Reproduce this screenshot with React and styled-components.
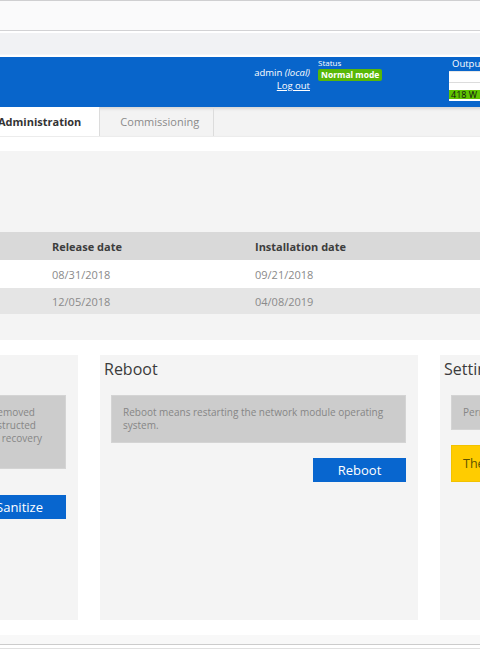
import React from "react";
import styled, { createGlobalStyle } from "styled-components";

const GlobalStyle = createGlobalStyle`
  html, body {
    margin: 0;
    padding: 0;
    background: #ffffff;
    overflow: hidden;
  }
  body {
    font-family: "Open Sans", "DejaVu Sans", sans-serif;
    width: 480px;
    height: 650px;
  }
`;

const Viewport = styled.div`
  width: 480px;
  height: 650px;
  overflow: hidden;
`;

// the screenshot is a crop of a wider page, shifted left
const Page = styled.div`
  width: 1000px;
  margin-left: -240px;
`;

const TopBar = styled.div`
  height: 29px;
  background: #fafafb;
  border-top: 1px solid #cfcfd1;
  border-bottom: 1px solid #d2d2d4;
`;

const SubBar = styled.div`
  height: 21px;
  margin-top: 2px;
  background: #f1f2f4;
  border-bottom: 1px solid #f7f7f8;
`;

const Header = styled.header`
  margin-top: 2px;
  height: 50px;
  background: #0865cb;
  display: flex;
  justify-content: flex-end;
  align-items: flex-start;
  color: #ffffff;
`;

const UserBlock = styled.div`
  margin-right: 8px;
  padding-top: 9px;
  text-align: right;
  font-size: 9.5px;
  line-height: 13px;
`;

const Local = styled.em`
  font-style: italic;
`;

const LogOut = styled.a`
  display: block;
  color: #ffffff;
  text-decoration: underline;
`;

const StatusBlock = styled.div`
  width: 131px;
  padding-top: 1px;
  font-size: 8px;
  line-height: 10px;
`;

const Badge = styled.span`
  display: inline-block;
  margin-top: 1px;
  padding: 0 3px;
  background: #58b806;
  border-radius: 2px;
  font-size: 8.5px;
  font-weight: 700;
  line-height: 12px;
`;

const OutputBlock = styled.div`
  width: 311px;
  padding-top: 1px;
  font-size: 9.5px;
  line-height: 12px;
`;

const OutputLabel = styled.div`
  padding-left: 3px;
`;

const Meter = styled.div`
  margin-top: 1px;
  height: 30px;
  background: #ffffff;
  display: flex;
  flex-direction: column;
  justify-content: flex-end;
  padding-bottom: 2px;
  box-sizing: border-box;
  border-top: 1px solid #e8e8e8;
`;

const MeterRule = styled.div`
  height: 1px;
  background: #dcdcdc;
  margin-bottom: 7px;
`;

const MeterBar = styled.div`
  height: 9px;
  background: #5fc400;
  color: #111111;
  font-size: 9px;
  line-height: 11px;
  padding-left: 2px;
  display: flex;
  align-items: center;
`;

const TabBar = styled.nav`
  height: 30px;
  display: flex;
  background: #f3f3f3;
  box-shadow: inset 0 2px 3px rgba(0, 0, 0, 0.12);
  border-bottom: 1px solid #ececec;
  box-sizing: border-box;
  padding-left: 220px;
`;

const Tab = styled.div`
  display: flex;
  align-items: center;
  padding: 0 ${({ $padR }) => $padR}px 0 ${({ $padL }) => $padL}px;
  font-size: 11px;
  border-right: 1px solid #dcdcdc;
  background: ${({ $active }) => ($active ? "#ffffff" : "transparent")};
  color: ${({ $active }) => ($active ? "#333333" : "#8a8a8a")};
  font-weight: ${({ $active }) => ($active ? 700 : 400)};
`;

const Panel = styled.section`
  margin-top: 14px;
  background: #f4f4f4;
  padding: 81px 0 26px;
`;

const Grid = styled.div`
  display: grid;
  grid-template-columns: 280px 203px 1fr;
  font-size: 11px;
`;

const Row = styled.div`
  display: contents;
`;

const Cell = styled.div`
  padding-left: 12px;
  height: ${({ $h }) => $h}px;
  display: flex;
  align-items: center;
  background: ${({ $bg }) => $bg};
  color: ${({ $head }) => ($head ? "#3d3d3d" : "#8a8a8a")};
  font-weight: ${({ $head }) => ($head ? 700 : 400)};
`;

const Cards = styled.div`
  margin-top: 15px;
  display: flex;
  gap: 22px;
`;

const Card = styled.div`
  width: 318px;
  height: 265px;
  flex-shrink: 0;
  background: #f4f4f4;
  padding: 3px 12px 0 11px;
  box-sizing: border-box;
  display: flex;
  flex-direction: column;
`;

const CardTitle = styled.h3`
  margin: 0 0 15px -7px;
  font-size: 16px;
  font-weight: 400;
  line-height: 22px;
  color: #3b3b3b;
`;

const Info = styled.div`
  background: #cccccc;
  color: #868686;
  font-size: 10px;
  line-height: 13px;
  padding: 10px 11px;
  border: 1px solid #d4d4d4;
  box-sizing: border-box;
`;

// one wrapped line of a text block, ending at a given width
const Line = styled.span`
  display: flex;
  justify-content: flex-end;
  width: ${({ $w }) => $w}px;
  white-space: nowrap;
`;

const Warning = styled.div`
  margin-top: 15px;
  background: #ffcc00;
  color: #5e5200;
  font-size: 12.5px;
  line-height: 15px;
  padding: 10px 11px;
  border: 1px solid #f2c200;
`;

const Button = styled.button`
  align-self: flex-end;
  margin-top: ${({ $top }) => $top}px;
  width: 93px;
  height: 24px;
  border: 0;
  background: #0866cf;
  color: #ffffff;
  font-family: "Open Sans", "DejaVu Sans", sans-serif;
  font-size: 13px;
  padding: 0;
`;

const Footer = styled.div`
  margin-top: 15px;
  height: 9px;
  background: #f8f8f8;
  border-bottom: 1px solid #cccccc;
`;

const FooterRule = styled.div`
  margin-top: 3px;
  height: 1px;
  background: #e0e0e0;
`;

const rows = [
  { name: "Network module", release: "08/31/2018", installed: "09/21/2018", bg: "#ffffff", h: 28 },
  { name: "Recovery image", release: "12/05/2018", installed: "04/08/2019", bg: "#e5e5e5", h: 26 },
];

const sanitizeLines = [
  { text: "Sanitizing means that all settings and user data are removed", w: 252 },
  { text: "and the network module operating system is reconstructed", w: 253 },
  { text: "with the original factory software from a recovery", w: 259 },
  { text: "image.", w: 30 },
];

export default function App() {
  return (
    <Viewport>
      <GlobalStyle />
      <Page>
        <TopBar />
        <SubBar />
        <Header>
          <UserBlock>
            admin <Local>(local)</Local>
            <LogOut>Log out</LogOut>
          </UserBlock>
          <StatusBlock>
            Status
            <br />
            <Badge>Normal mode</Badge>
          </StatusBlock>
          <OutputBlock>
            <OutputLabel>Output</OutputLabel>
            <Meter>
              <MeterRule />
              <MeterBar>418 W</MeterBar>
            </Meter>
          </OutputBlock>
        </Header>

        <TabBar>
          <Tab $active $padL={18} $padR={18}>Administration</Tab>
          <Tab $padL={20} $padR={14}>Commissioning</Tab>
        </TabBar>

        <Panel>
          <Grid>
            <Row>
              <Cell $head $h={28} $bg="#d9d9d9">Software</Cell>
              <Cell $head $h={28} $bg="#d9d9d9">Release date</Cell>
              <Cell $head $h={28} $bg="#d9d9d9">Installation date</Cell>
            </Row>
            {rows.map((r) => (
              <Row key={r.name}>
                <Cell $h={r.h} $bg={r.bg}>{r.name}</Cell>
                <Cell $h={r.h} $bg={r.bg}>{r.release}</Cell>
                <Cell $h={r.h} $bg={r.bg}>{r.installed}</Cell>
              </Row>
            ))}
          </Grid>
        </Panel>

        <Cards>
          <Card>
            <CardTitle>Sanitize</CardTitle>
            <Info>
              {sanitizeLines.map((l) => (
                <Line key={l.text} $w={l.w}>{l.text}</Line>
              ))}
            </Info>
            <Button $top={26}>Sanitize</Button>
          </Card>
          <Card>
            <CardTitle>Reboot</CardTitle>
            <Info>Reboot means restarting the network module operating system.</Info>
            <Button $top={15}>Reboot</Button>
          </Card>
          <Card>
            <CardTitle>Settings</CardTitle>
            <Info>Permanently store the current settings.</Info>
            <Warning>There are no unsaved settings.</Warning>
          </Card>
        </Cards>

        <Footer />
        <FooterRule />
      </Page>
    </Viewport>
  );
}
